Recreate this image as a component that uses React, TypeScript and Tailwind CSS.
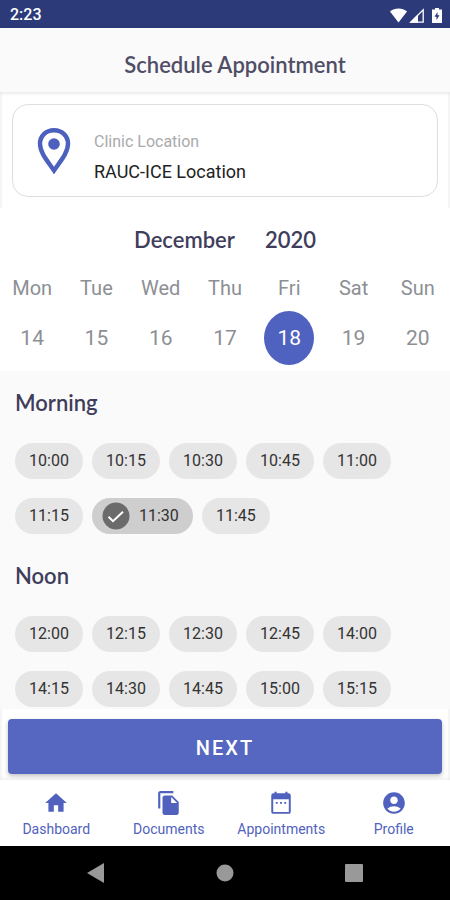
import { MdAccountCircle, MdFileCopy, MdHome } from "react-icons/md";

const days = [
  { name: "Mon", date: 14 },
  { name: "Tue", date: 15 },
  { name: "Wed", date: 16 },
  { name: "Thu", date: 17 },
  { name: "Fri", date: 18 },
  { name: "Sat", date: 19 },
  { name: "Sun", date: 20 },
];

const selectedDate = 18;
const selectedSlot = "11:30";

const slotGroups = [
  {
    title: "Morning",
    slots: ["10:00", "10:15", "10:30", "10:45", "11:00", "11:15", "11:30", "11:45"],
  },
  {
    title: "Noon",
    slots: ["12:00", "12:15", "12:30", "12:45", "14:00", "14:15", "14:30", "14:45", "15:00", "15:15"],
  },
];

function CalendarIcon() {
  return (
    <svg viewBox="0 0 24 24" className="size-[26px]" fill="currentColor" aria-hidden="true">
      <path
        fillRule="evenodd"
        d="M5 3h1V1.500h2V3h8V1.500h2V3h1a2 2 0 0 1 2 2v15a2 2 0 0 1-2 2H5a2 2 0 0 1-2-2V5a2 2 0 0 1 2-2zM4.800 8.500V20.200h14.400V8.500z"
      />
      <path d="M7.200 11h1.800v1.800H7.200zM11.100 11h1.800v1.800h-1.800zM15 11h1.800v1.800H15z" />
    </svg>
  );
}

const navItems = [
  { label: "Dashboard", icon: <MdHome className="size-[26px]" /> },
  { label: "Documents", icon: <MdFileCopy className="size-[26px]" /> },
  { label: "Appointments", icon: <CalendarIcon /> },
  { label: "Profile", icon: <MdAccountCircle className="size-[26px]" /> },
];

function StatusBar() {
  return (
    <div className="flex h-7 items-center justify-between bg-[#2c3a7a] pt-[2px] pr-2 pl-[10px] text-white">
      <span className="text-base font-medium">2:23</span>
      <div className="flex items-center gap-[2px]">
        <svg width="17" height="15" viewBox="0 0 17 15" fill="currentColor" aria-hidden="true">
          <path d="M8.500 14.500 0 3.600C2.300 1.500 5.200.400 8.500.400s6.200 1.100 8.500 3.200z" />
        </svg>
        <svg width="15" height="15" viewBox="0 0 15 15" aria-hidden="true">
          <path d="M1.800 14.200 14.200 1.800v12.400z" fill="none" stroke="currentColor" strokeWidth="1.300" />
          <path d="M.500 14.700 9 6.200v8.500z" fill="currentColor" />
        </svg>
        <svg width="10" height="15" viewBox="0 0 10 15" className="ml-[6px]" aria-hidden="true">
          <path d="M3 0h4v1.500h3V15H0V1.500h3z" fill="currentColor" />
          <path d="M5.500 4 2.500 8.800h2V12l3-4.800h-2z" fill="#2c3a7a" />
        </svg>
      </div>
    </div>
  );
}

function TimeSlot({ time, selected }: { time: string; selected: boolean }) {
  if (selected) {
    return (
      <button
        type="button"
        aria-pressed="true"
        className="flex h-9 items-center gap-[9px] rounded-full bg-[#cecece] pr-[14px] pl-[10px] text-base text-[#333]"
      >
        <svg viewBox="0 0 28 28" className="size-7" aria-hidden="true">
          <circle cx="14" cy="14" r="13.500" fill="#6b6b6b" />
          <path d="m6.500 14.800 4.500 4.400L21 9.800" fill="none" stroke="#fff" strokeWidth="2" />
        </svg>
        {time}
      </button>
    );
  }

  return (
    <button
      type="button"
      aria-pressed="false"
      className="h-9 w-[68px] rounded-full bg-[#e6e6e6] text-base text-[#333]"
    >
      {time}
    </button>
  );
}

export default function App() {
  return (
    <div className="flex min-h-screen flex-col bg-[#fafafa] font-[Roboto,sans-serif]">
      <StatusBar />

      {/* Header */}
      <header className="z-10 flex h-16 items-center justify-center bg-[#fafafa] pt-2 pl-5 shadow-[0_1px_4px_rgba(0,0,0,0.12)]">
        <h1 className="font-[Lato,sans-serif] text-[22px] font-semibold text-[#504e66]">
          Schedule Appointment
        </h1>
      </header>

      <main className="flex flex-1 flex-col">
        {/* Clinic location */}
        <section className="border-x-2 border-[#f5f5f5] bg-white px-[10px] pt-3 pb-[11px]">
          <div className="flex h-[93px] items-center gap-[23px] rounded-2xl border border-[#dedede] pl-6">
            <svg width="34" height="46" viewBox="0 0 34 46" className="text-[#4c60bd]" aria-hidden="true">
              <path
                d="M17 2.200C8.800 2.200 3 8 3 15.800 3 25 11 33.500 17 42.500c6-9 14-17.500 14-26.700C31 8 25.200 2.200 17 2.200z"
                fill="none"
                stroke="currentColor"
                strokeWidth="4.400"
              />
              <circle cx="17" cy="16" r="5.800" fill="currentColor" />
            </svg>
            <div className="pt-3">
              <p className="text-base leading-[30px] text-[#aaa]">Clinic Location</p>
              <p className="text-lg leading-[30px] text-[#222]">RAUC-ICE Location</p>
            </div>
          </div>
        </section>

        {/* Date picker */}
        <section className="bg-white pt-4 pb-[6px]">
          <h2 className="flex justify-center gap-[30px] font-[Lato,sans-serif] text-[22px] leading-8 font-semibold text-[#3f3d5c]">
            <span>December</span>
            <span>2020</span>
          </h2>
          <div className="grid grid-cols-7 pt-[18px] text-xl text-[#8c8f94]">
            {days.map((day) => (
              <button
                key={day.date}
                type="button"
                aria-pressed={day.date === selectedDate}
                className="flex flex-col items-center gap-[9px]"
              >
                <span className="leading-7">{day.name}</span>
                <span
                  className={
                    day.date === selectedDate
                      ? "flex h-[54px] w-[50px] items-center justify-center rounded-[50%] bg-[#4f62c0] pt-[2px] text-[21px] text-white"
                      : "flex h-[54px] w-[50px] items-center justify-center pt-[2px] text-[21px]"
                  }
                >
                  {day.date}
                </span>
              </button>
            ))}
          </div>
        </section>

        {/* Time slots */}
        <div className="flex-1 pb-[2px]">
          {slotGroups.map((group) => (
            <section key={group.title} className="px-[15px] pt-4 pb-[10px] last:pb-0">
              <h2 className="font-[Lato,sans-serif] text-[22px] leading-8 font-semibold text-[#3f3d5c]">
                {group.title}
              </h2>
              <div className="flex flex-wrap gap-x-[9px] gap-y-[19px] pt-6">
                {group.slots.map((slot) => (
                  <TimeSlot key={slot} time={slot} selected={slot === selectedSlot} />
                ))}
              </div>
            </section>
          ))}
        </div>

        <div className="border-x-2 border-[#f5f5f5] bg-white px-[6px] pt-[10px] pb-[6px]">
          <button
            type="button"
            className="h-[55px] w-full rounded-[4px] bg-[#5567c1] pt-[2px] text-xl font-medium tracking-widest text-white shadow-[0_2px_4px_rgba(0,0,0,0.25)]"
          >
            NEXT
          </button>
        </div>
      </main>

      {/* Bottom navigation */}
      <nav className="z-10 grid h-[66px] grid-cols-4 bg-white text-[#5062bd] shadow-[0_-1px_4px_rgba(0,0,0,0.08)]">
        {navItems.map((item) => (
          <a key={item.label} href="#" className="flex flex-col items-center gap-[2px] pt-[10px]">
            {item.icon}
            <span className="text-sm leading-[22px]">{item.label}</span>
          </a>
        ))}
      </nav>

      {/* System buttons */}
      <div className="flex h-[54px] items-center justify-center gap-[111px] bg-black text-[#999]">
        <button type="button" aria-label="Back">
          <svg width="18" height="20" viewBox="0 0 18 20" fill="currentColor">
            <path d="M0 10 17 0v20z" />
          </svg>
        </button>
        <button type="button" aria-label="Home">
          <svg width="18" height="18" viewBox="0 0 18 18" fill="currentColor">
            <circle cx="9" cy="9" r="8.500" />
          </svg>
        </button>
        <button type="button" aria-label="Recent apps">
          <svg width="18" height="18" viewBox="0 0 18 18" fill="currentColor">
            <rect width="18" height="18" rx="1" />
          </svg>
        </button>
      </div>
    </div>
  );
}
